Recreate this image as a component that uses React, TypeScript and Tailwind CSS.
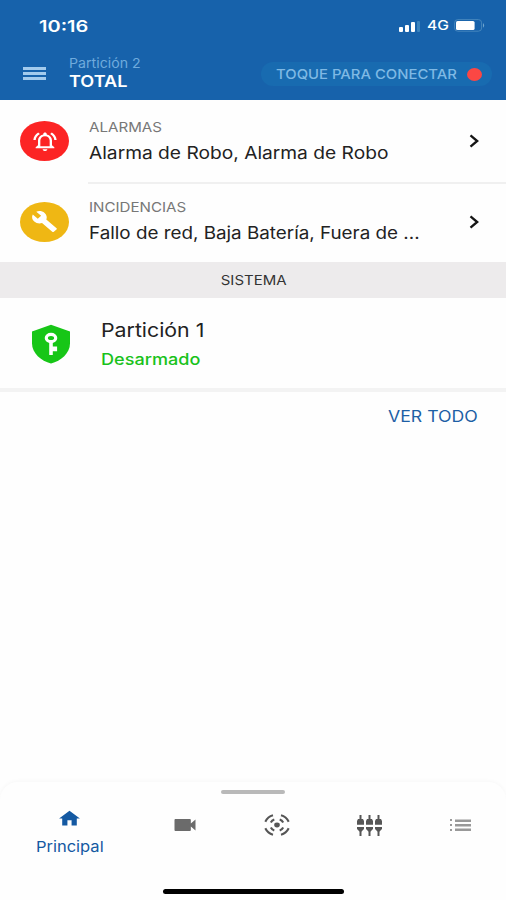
import type { ReactNode } from 'react';
import { MdBuild, MdHome, MdOutlineNotificationsActive, MdVideocam } from 'react-icons/md';

// Wide-set label; the scale class given in className sets how wide the letters are.
function Label({ className, children }: { className: string; children: ReactNode }) {
  return <span className={`block whitespace-nowrap ${className}`}>{children}</span>;
}

function Chevron() {
  return (
    <svg viewBox="0 0 10 14" className="h-3.5 w-2.5" fill="none" stroke="#151515" strokeWidth="2.3">
      <path d="M1.5 1.4 8.2 7 1.5 12.6" />
    </svg>
  );
}

function StatusBar() {
  return (
    <div className="flex h-[51px] items-center justify-between pl-[39px] pr-[20px]">
      <Label className="origin-left scale-x-[1.25] text-[16px] font-semibold text-white">10:16</Label>
      <div className="flex items-center">
        <div className="flex h-3 items-end gap-[2px]">
          <i className="h-[5px] w-[4px] rounded-[1px] bg-white" />
          <i className="h-[7px] w-[4px] rounded-[1px] bg-white" />
          <i className="h-[10px] w-[4px] rounded-[1px] bg-white" />
          <i className="h-[11px] w-[3px] rounded-[1px] bg-[#3b83bd]" />
        </div>
        <div className="ml-[7px] w-[27px]">
          <Label className="origin-left scale-x-[1.2] text-[13px] font-medium text-white">4G</Label>
        </div>
        <svg viewBox="0 0 32 13" className="h-[13px] w-8">
          <rect x="0.6" y="0.6" width="27" height="11.6" rx="3.2" fill="none" stroke="#4586bd" />
          <rect x="2" y="2" width="18.6" height="9" rx="1.6" fill="#fff" />
          <path d="M29 4q2.4 2.4 0 4.8z" fill="#6fa6d0" />
        </svg>
      </div>
    </div>
  );
}

function Header() {
  return (
    <header className="h-[100px] bg-[#1762ab]">
      <StatusBar />
      <div className="flex h-[44px] items-center pl-[23px]">
        <div className="flex w-[46px] flex-col gap-[2px]">
          <i className="h-[3px] w-[23px] bg-[#a3cbed]" />
          <i className="h-[3px] w-[23px] bg-[#a3cbed]" />
          <i className="h-[3px] w-[23px] bg-[#a3cbed]" />
        </div>
        <div className="w-[192px] pb-[2px]">
          <Label className="origin-left scale-x-[1.05] text-[13.5px] leading-[18px] text-[#6fabdd]">Partición 2</Label>
          <Label className="origin-left scale-x-[1.13] text-[16px] leading-[19px] font-semibold text-white">TOTAL</Label>
        </div>
        <div className="mt-[2px] flex h-[24px] w-[231px] items-center rounded-full bg-[#186bb0] pl-[15px]">
          <div className="w-[191px]">
            <Label className="origin-left scale-x-[1.1] text-[13.5px] font-medium text-[#7fb9e4]">TOQUE PARA CONECTAR</Label>
          </div>
          <i className="h-[13px] w-[15px] rounded-[50%] bg-[#fb4744]" />
        </div>
      </div>
    </header>
  );
}

function AlertRow({ icon, color, title, text }: { icon: ReactNode; color: string; title: string; text: ReactNode }) {
  return (
    <div className="flex h-full items-center pl-[20px]">
      <div className={`flex h-[40px] w-[49px] items-center justify-center rounded-[50%] text-white ${color}`}>{icon}</div>
      <div className="ml-[20px] w-[380px]">
        <Label className="origin-left scale-x-[1.12] text-[13.5px] leading-[24px] text-[#777]">{title}</Label>
        {text}
      </div>
      <Chevron />
    </div>
  );
}

function TabBar() {
  return (
    <nav className="flex h-[118px] flex-col items-center rounded-t-[18px] bg-[#fefefe] shadow-[0_-1px_4px_rgba(0,0,0,0.03)]">
      <i className="mt-[8px] h-[4px] w-[64px] rounded-full bg-[#b9b9b9]" />
      <div className="mt-[6px] flex h-[62px] w-full items-start">
        <div className="flex w-[139px] flex-col items-center pt-[8px] text-[#1459a2]">
          <MdHome preserveAspectRatio="none" className="h-[21px] w-[25px]" />
          <Label className="mt-[8px] scale-x-[1.1] text-[15px] leading-[20px]">Principal</Label>
        </div>
        <div className="flex h-[50px] w-[92px] items-center justify-center text-[#6b6b6b]">
          <MdVideocam preserveAspectRatio="none" className="h-[24px] w-[28px]" />
        </div>
        <div className="flex h-[50px] w-[92px] items-center justify-center">
          <svg viewBox="0 0 26 22" className="h-[22px] w-[26px]" fill="none" stroke="#555" strokeWidth="2.1">
            <ellipse cx="13" cy="11" rx="2.8" ry="2.4" fill="#555" stroke="none" />
            <path d="M1.3 7.7Q3.8 2.6 9 1.3M17 1.3Q22.2 2.6 24.7 7.7M24.7 14.3Q22.2 19.4 17 20.7M9 20.7Q3.8 19.4 1.3 14.3" />
            <path d="M6.8 8.5Q8 6.3 10.3 5.5M15.7 5.5Q18 6.3 19.2 8.5M19.2 13.5Q18 15.7 15.7 16.5M10.3 16.5Q8 15.7 6.8 13.5" />
          </svg>
        </div>
        <div className="flex h-[50px] w-[92px] items-center justify-center">
          <svg viewBox="0 0 27 21" className="h-[21px] w-[27px]" fill="#555">
            {[0, 9, 18].map((x) => (
              <path key={x} transform={`translate(${x} 0)`} d="M3.5 0h2v4H7l1 2v3.7H1V6l1-2h1.500zM1 12h7v2l-1.500 1.500-1 1.200V21h-2v-4.300l-1-1.200L1 14z" />
            ))}
          </svg>
        </div>
        <div className="flex h-[50px] w-[91px] items-center justify-center">
          <svg viewBox="0 0 21 12" className="h-[12px] w-[21px]" fill="#999">
            <path d="M0 0h2v2H0zM0 5h2v2H0zM0 10h2v2H0zM5 .5h16V3H5zM5 5h16v2.500H5zM5 9.500h16V12H5z" />
          </svg>
        </div>
      </div>
      <i className="mt-[27px] h-[5px] w-[181px] rounded-full bg-black" />
    </nav>
  );
}

export default function App() {
  return (
    <div className="flex h-[900px] w-[506px] flex-col overflow-hidden bg-[#fefefe] font-['Inter','Liberation_Sans',sans-serif]">
      <Header />
      <div className="h-[82px]">
        <AlertRow
          icon={<MdOutlineNotificationsActive preserveAspectRatio="none" className="h-[23px] w-[28px]" />}
          color="bg-[#fc2424]"
          title="ALARMAS"
          text={<Label className="origin-left scale-x-[1.128] text-[17px] leading-[29px] text-[#222]">Alarma de Robo, Alarma de Robo</Label>}
        />
      </div>
      <i className="ml-[88px] h-[2px] bg-[#f0f0f0]" />
      <div className="h-[78px] pb-[3px]">
        <AlertRow
          icon={<MdBuild preserveAspectRatio="none" className="h-[23px] w-[27px]" />}
          color="bg-[#efb714]"
          title="INCIDENCIAS"
          text={<Label className="origin-left scale-x-[1.107] text-[17px] leading-[29px] text-[#222]">Fallo de red, Baja Batería, Fuera de ...</Label>}
        />
      </div>
      <div className="flex h-[36px] items-center justify-center bg-[#edebec] pl-[2px]">
        <Label className="scale-x-[1.11] text-[13.5px] text-[#333]">SISTEMA</Label>
      </div>
      <div className="flex h-[94px] items-center border-b-[4px] border-[#f3f3f3] pl-[31px]">
        <svg viewBox="0 0 40 40" className="mt-[2px] h-10 w-10">
          <path d="M20 .8 39 7.5v12C39 29 30 37 20 39.5 10 37 1 29 1 19.5v-12z" fill="#17c617" />
          <ellipse cx="20" cy="14" rx="4.7" ry="3.7" fill="none" stroke="#fff" strokeWidth="3.2" />
          <path d="M18.2 17h3.6v5.5h4.3v4.8h-4.3V31h-3.6z" fill="#fff" />
        </svg>
        <div className="ml-[30px] pt-[4px]">
          <Label className="origin-left scale-x-[1.12] text-[19px] leading-[28px] text-[#222]">Partición 1</Label>
          <Label className="origin-left scale-x-[1.13] text-[16px] leading-[28px] font-medium text-[#19c21b]">Desarmado</Label>
        </div>
      </div>
      <div className="flex h-[50px] items-center pl-[388px]">
        <Label className="origin-left scale-x-[1.14] text-[15.5px] text-[#1d5fa5]">VER TODO</Label>
      </div>
      <div className="flex-1" />
      <TabBar />
    </div>
  );
}
